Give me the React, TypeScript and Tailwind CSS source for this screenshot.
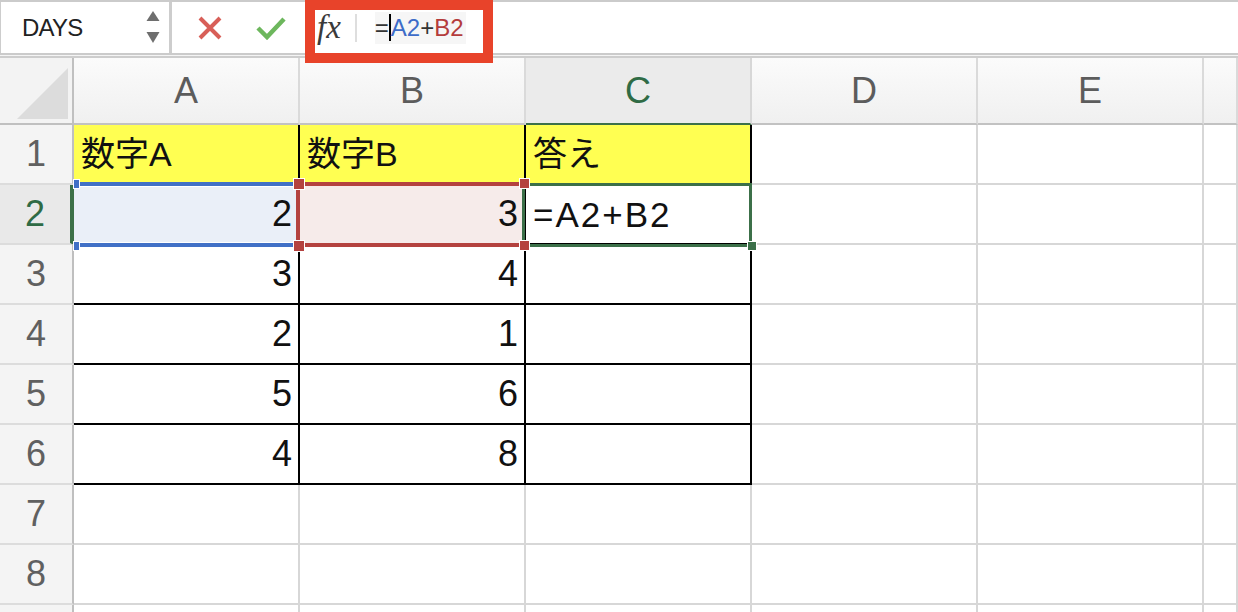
import React from "react"

const cols = ["A", "B", "C", "D", "E", ""]

const rows: { n: number; cells: string[] }[] = [
  { n: 1, cells: ["数字A", "数字B", "答え", "", "", ""] },
  { n: 2, cells: ["2", "3", "=A2+B2", "", "", ""] },
  { n: 3, cells: ["3", "4", "", "", "", ""] },
  { n: 4, cells: ["2", "1", "", "", "", ""] },
  { n: 5, cells: ["5", "6", "", "", "", ""] },
  { n: 6, cells: ["4", "8", "", "", "", ""] },
  { n: 7, cells: ["", "", "", "", "", ""] },
  { n: 8, cells: ["", "", "", "", "", ""] },
  { n: 9, cells: ["", "", "", "", "", ""] },
]

function Cell({ row, col, value }: { row: number; col: number; value: string }) {
  const boxed = row <= 6 && col <= 2
  const isNum = value !== "" && /^\d+$/.test(value)
  const isFormula = value.startsWith("=")

  let bg = "bg-white"
  if (row === 1 && col <= 2) bg = "bg-[#ffff52]"
  if (row === 2 && col === 0) bg = "bg-[#eaeff8]"
  if (row === 2 && col === 1) bg = "bg-[#f6ebea]"

  return (
    <div
      className={`flex items-center overflow-hidden border-r-2 border-b-2 ${
        boxed ? "border-black" : "border-[#d7d7d7]"
      } ${bg} ${isNum ? "justify-end pr-[6px] text-[36px]" : "justify-start pl-[7px] text-[34px]"} ${
        isFormula ? "tracking-[2px] text-[35px]" : ""
      } text-[#111] leading-none`}
    >
      {value}
    </div>
  )
}

export default function App() {
  return (
    <div className="relative w-[1238px] h-[612px] overflow-hidden bg-white font-['Liberation_Sans','Noto_Sans_CJK_JP',sans-serif]">
      {/* Toolbar */}
      <div className="flex h-[55px] border-t-2 border-b-2 border-[#cbcbcb] bg-white">
        {/* Name box */}
        <div className="flex w-[172px] items-center justify-between border-l border-r-[3px] border-[#cdcdcd] pl-[21px] pr-[9px]">
          <span className="text-[24px] tracking-[-0.8px] text-[#222]">DAYS</span>
          <svg width="14" height="34" viewBox="0 0 14 34">
            <polygon points="0.5,10 13.5,10 7,0" fill="#6e6e6e" />
            <polygon points="0.5,21 13.5,21 7,32" fill="#6e6e6e" />
          </svg>
        </div>

        {/* Cancel / enter */}
        <div className="flex items-center pl-[26px] gap-[34px]">
          <svg width="24" height="24" viewBox="0 0 24 24">
            <path d="M2 2 L22 22 M22 2 L2 22" stroke="#d85f58" strokeWidth="4" />
          </svg>
          <svg width="30" height="24" viewBox="0 0 30 24">
            <path d="M2 12 L11 21 L28 3" stroke="#6db75d" strokeWidth="4.5" fill="none" />
          </svg>
        </div>

        {/* Formula */}
        <div className="flex items-center pl-[31px]">
          <span className="font-['Liberation_Serif',serif] italic text-[33px] text-[#3a3a3a] leading-none">fx</span>
          <div className="ml-[14px] h-[28px] w-[2px] bg-[#dedede]" />
          <div className="ml-[18px] flex h-[32px] items-center bg-[#f6f6f6] pr-[2px] text-[24px] leading-none">
            <span className="text-[#333]">=</span>
            <span className="h-[27px] w-[2px] bg-black" />
            <span className="text-[#3d6cc8]">A2</span>
            <span className="text-[#333]">+</span>
            <span className="text-[#b43c3c]">B2</span>
          </div>
        </div>
      </div>
      <div className="h-px bg-[#f4f4f4]" />
      <div className="h-[2px] bg-[#cdcdcd]" />

      {/* Sheet grid */}
      <div className="relative grid grid-cols-[74px_226px_226px_226px_226px_226px_34px] grid-rows-[67px_repeat(8,60px)_20px]">
        {/* Corner */}
        <div className="border-r-2 border-b-2 border-[#c0c0c0] bg-[#f3f3f3]">
          <svg width="72" height="65" viewBox="0 0 72 65">
            <polygon points="68,10 68,61 17,61" fill="#dcdcdc" />
          </svg>
        </div>
        {cols.map((c, i) =>
          i === 2 ? (
            <div
              key={i}
              className="flex items-center justify-center border-r-2 border-r-[#d7d7d7] border-b-2 border-b-[#3c7049] bg-[#ebebeb] text-[36px] text-[#2f6b45] leading-none"
            >
              {c}
            </div>
          ) : (
            <div
              key={i}
              className="flex items-center justify-center border-r-2 border-r-[#dadada] border-b-2 border-b-[#c2c2c2] bg-linear-to-b from-[#fbfbfb] to-[#f0f0f0] text-[36px] text-[#5c5c5c] leading-none"
            >
              {c}
            </div>
          )
        )}

        {rows.map((r) => (
          <React.Fragment key={r.n}>
            {r.n === 2 ? (
              <div className="flex items-center justify-center border-b-2 border-b-[#dcdcdc] border-r-4 border-r-[#3c7049] bg-[#e9e9e9] text-[36px] text-[#2f6b45] leading-none">
                {r.n}
              </div>
            ) : (
              <div className="flex items-center justify-center border-b-2 border-b-[#dcdcdc] border-r-2 border-r-[#bfbfbf] bg-[#f4f4f4] text-[36px] text-[#606060] leading-none">
                {r.n < 9 ? r.n : ""}
              </div>
            )}
            {r.cells.map((v, ci) => (
              <Cell key={ci} row={r.n} col={ci} value={v} />
            ))}
          </React.Fragment>
        ))}

        {/* Reference range A2 (blue) */}
        <div className="absolute left-[74px] top-[124px] h-[65px] w-[226px] border-y-4 border-[#4170c6] shadow-[inset_0_1px_0_#fff,inset_0_-1px_0_#fff]" />
        <div className="absolute left-[73px] top-[121px] h-[10px] w-[7px] border border-white bg-[#4170c6]" />
        <div className="absolute left-[73px] top-[183px] h-[10px] w-[7px] border border-white bg-[#4170c6]" />

        {/* Reference range B2 (red) */}
        <div className="absolute left-[296px] top-[124px] h-[65px] w-[230px] border-y-4 border-l-4 border-[#b4423f]" />

        {/* Active cell C2 */}
        <div className="absolute left-[522px] top-[125px] h-[64px] w-[230px] border-[3px] border-[#3c7049]" />
        <div className="absolute left-[747px] top-[183px] h-[10px] w-[10px] border border-white bg-[#3c7049]" />

        {/* Red corner handles */}
        <div className="absolute left-[293px] top-[120px] h-[12px] w-[12px] border border-white bg-[#b4423f]" />
        <div className="absolute left-[293px] top-[182px] h-[12px] w-[12px] border border-white bg-[#b4423f]" />
        <div className="absolute left-[519px] top-[120px] h-[11px] w-[11px] border border-white bg-[#b4423f]" />
        <div className="absolute left-[519px] top-[182px] h-[11px] w-[11px] border border-white bg-[#b4423f]" />
      </div>

      {/* Annotation frame around the formula */}
      <div className="absolute left-[305px] top-0 h-[63px] w-[188px] border-[10px] border-[#e8432a]" />
    </div>
  )
}
